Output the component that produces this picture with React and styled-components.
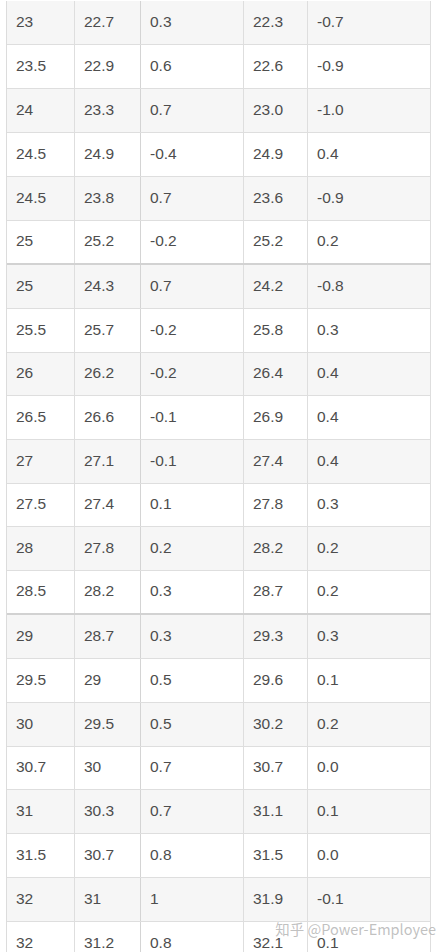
import React from "react";
import styled, { createGlobalStyle } from "styled-components";

const rows = [
  ["23", "22.7", "0.3", "22.3", "-0.7"],
  ["23.5", "22.9", "0.6", "22.6", "-0.9"],
  ["24", "23.3", "0.7", "23.0", "-1.0"],
  ["24.5", "24.9", "-0.4", "24.9", "0.4"],
  ["24.5", "23.8", "0.7", "23.6", "-0.9"],
  ["25", "25.2", "-0.2", "25.2", "0.2"],
  ["25", "24.3", "0.7", "24.2", "-0.8"],
  ["25.5", "25.7", "-0.2", "25.8", "0.3"],
  ["26", "26.2", "-0.2", "26.4", "0.4"],
  ["26.5", "26.6", "-0.1", "26.9", "0.4"],
  ["27", "27.1", "-0.1", "27.4", "0.4"],
  ["27.5", "27.4", "0.1", "27.8", "0.3"],
  ["28", "27.8", "0.2", "28.2", "0.2"],
  ["28.5", "28.2", "0.3", "28.7", "0.2"],
  ["29", "28.7", "0.3", "29.3", "0.3"],
  ["29.5", "29", "0.5", "29.6", "0.1"],
  ["30", "29.5", "0.5", "30.2", "0.2"],
  ["30.7", "30", "0.7", "30.7", "0.0"],
  ["31", "30.3", "0.7", "31.1", "0.1"],
  ["31.5", "30.7", "0.8", "31.5", "0.0"],
  ["32", "31", "1", "31.9", "-0.1"],
  ["32", "31.2", "0.8", "32.1", "0.1"],
];

// rows where two screenshots were stitched together
const seams = [5, 13];
// the stitched parts were scaled a little, so a few rows come out a pixel shorter
const shortRows = [8, 11, 17];

function App() {
  return (
    <Page>
      <GlobalStyle />
      <Table>
        {rows.map((row, i) => (
          <Row
            key={i}
            striped={i % 2 === 0}
            seam={seams.includes(i)}
            short={shortRows.includes(i)}
          >
            {row.map((cell, j) => (
              <Cell key={j}>{cell}</Cell>
            ))}
          </Row>
        ))}
      </Table>
      <Watermark>知乎 @Power-Employee</Watermark>
    </Page>
  );
}

export default App;

const GlobalStyle = createGlobalStyle`
  html, body {
    margin: 0;
    padding: 0;
    background: #fff;
  }
`;

const Page = styled.div`
  position: relative;
  height: 952px;
  overflow: hidden;
  padding-top: 1px;
  box-sizing: border-box;
  font-family: "Liberation Sans", Arial, sans-serif;
`;

const Table = styled.div`
  margin-left: 6px;
  width: 424px;
  border-left: 1px solid #dcdcdc;
`;

const Row = styled.div.withConfig({
  shouldForwardProp: (prop) => !["striped", "seam", "short"].includes(prop),
})`
  display: grid;
  grid-template-columns: 68px 66px 103px 64px 123px;
  height: ${(p) => (p.short ? "43px" : "44px")};
  box-sizing: border-box;
  background: ${(p) => (p.striped ? "#f6f6f6" : "#fff")};
  border-bottom: ${(p) => (p.seam ? "2px solid #d2d2d2" : "1px solid #dedede")};
`;

const Cell = styled.div`
  display: flex;
  align-items: center;
  padding: 0 0 2px 9px;
  border-right: 1px solid #dedede;
  font-size: 15.5px;
  color: #4d4d4d;
  white-space: nowrap;

  &:nth-child(2) {
    border-right-color: #d4d4d4;
  }
`;

const Watermark = styled.div`
  position: absolute;
  right: 1px;
  bottom: 14px;
  font-family: "Noto Sans CJK SC", sans-serif;
  font-size: 14.5px;
  line-height: 18px;
  color: rgba(140, 140, 140, 0.55);
  text-shadow: 0 0 2px rgba(255, 255, 255, 0.9);
`;
